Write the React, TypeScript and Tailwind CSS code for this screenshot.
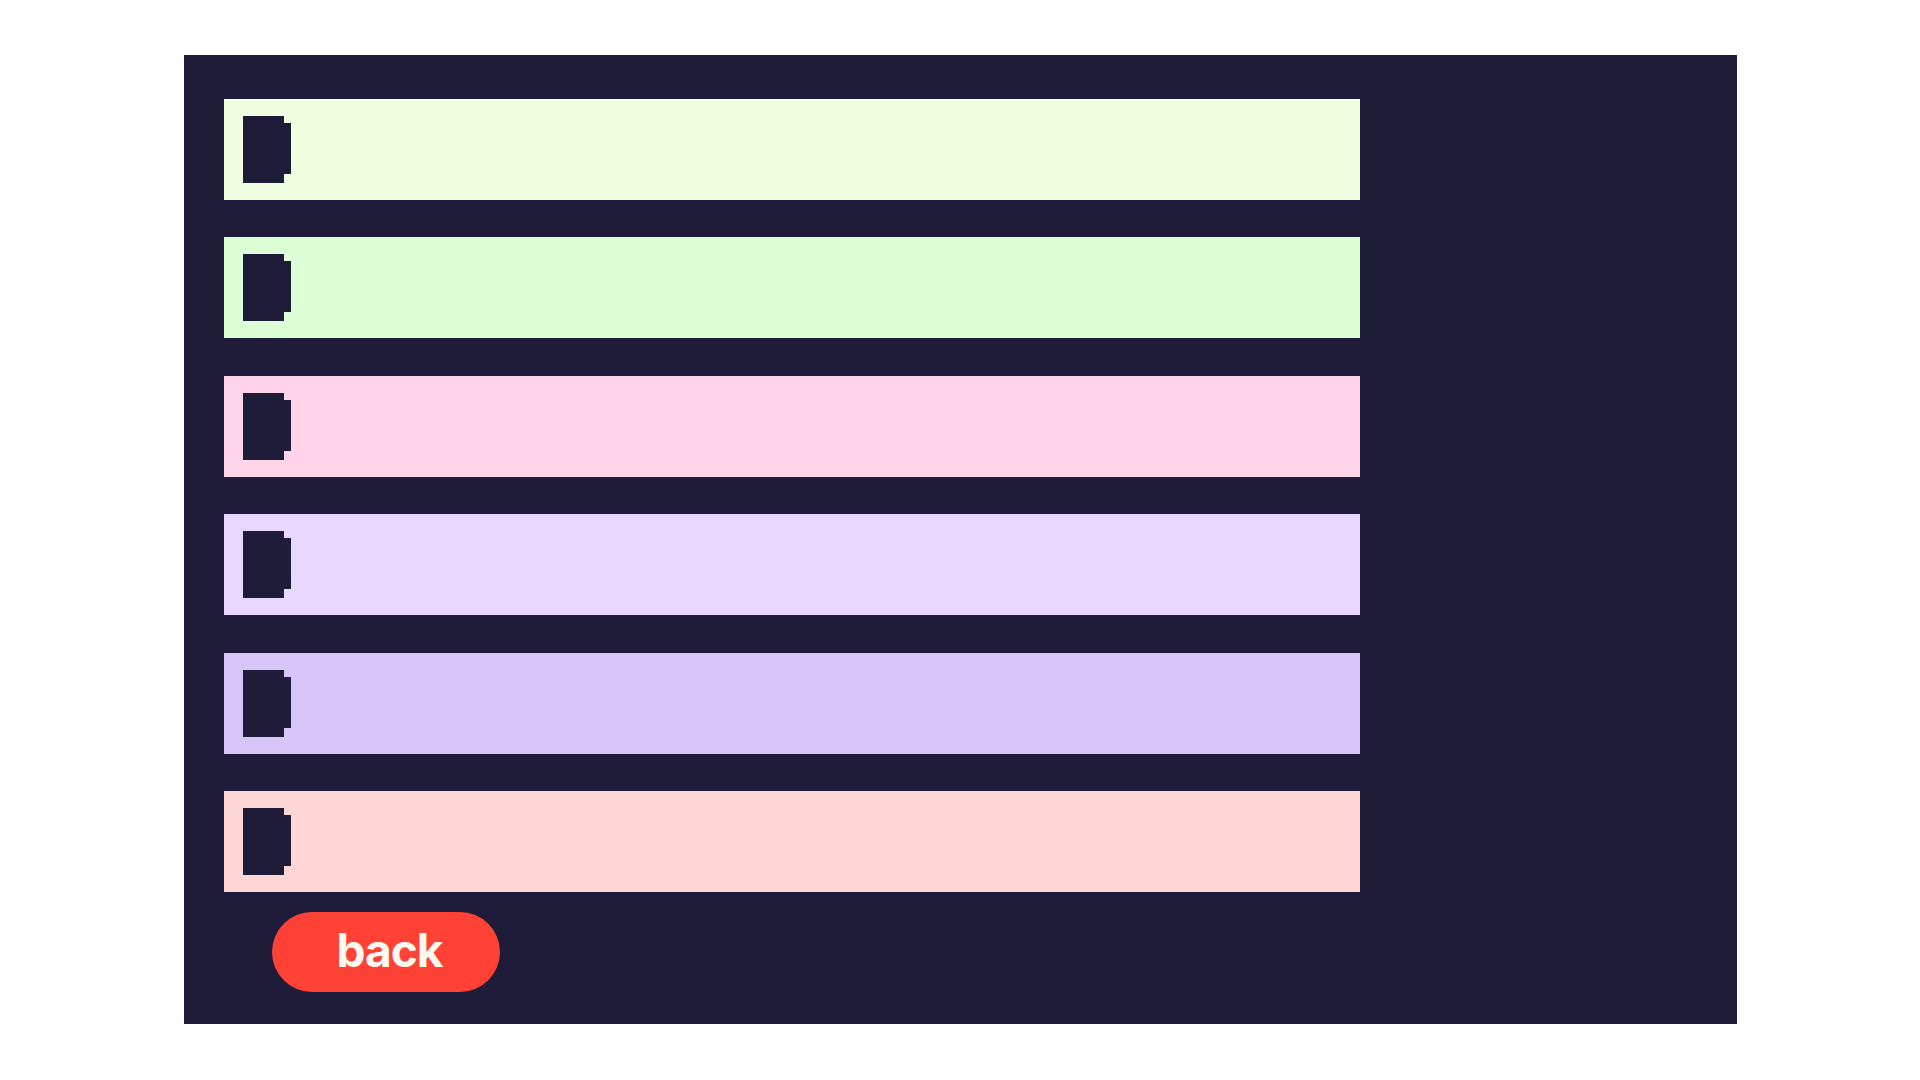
import React from 'react';

const rows = [
  'bg-[#f0ffe0]',
  'bg-[#ddffd6]',
  'bg-[#ffd4e8]',
  'bg-[#e8d8ff]',
  'bg-[#d9c4f8]',
  'bg-[#ffd6d6]',
];

function BlockIcon() {
  return (
    <svg width="48" height="67" viewBox="0 0 48 67" className="shrink-0">
      <polygon points="0,0 41,0 41,7 48,7 48,58 41,58 41,67 0,67" fill="#1e1c38" />
    </svg>
  );
}

export default function App() {
  return (
    <div className="min-h-screen bg-white flex justify-center pt-[55px]">
      <div className="w-[1553px] h-[969px] bg-[#1e1c38] pt-[44px] pl-[40px]">
        <div className="flex flex-col gap-[37.4px] w-[1136px]">
          {rows.map((c, i) => (
            <div key={i} className={`${c} h-[101px] flex items-center pl-[19px]`}>
              <BlockIcon />
            </div>
          ))}
        </div>
        <button className="mt-[20px] ml-[48px] w-[228px] h-[80px] rounded-full bg-[#ff4136] text-[#fff9f2] font-bold text-[46px] tracking-[-1px] leading-none flex items-center justify-center pl-[8px] pb-[4px] font-['Inter',sans-serif]">
          back
        </button>
      </div>
    </div>
  );
}
